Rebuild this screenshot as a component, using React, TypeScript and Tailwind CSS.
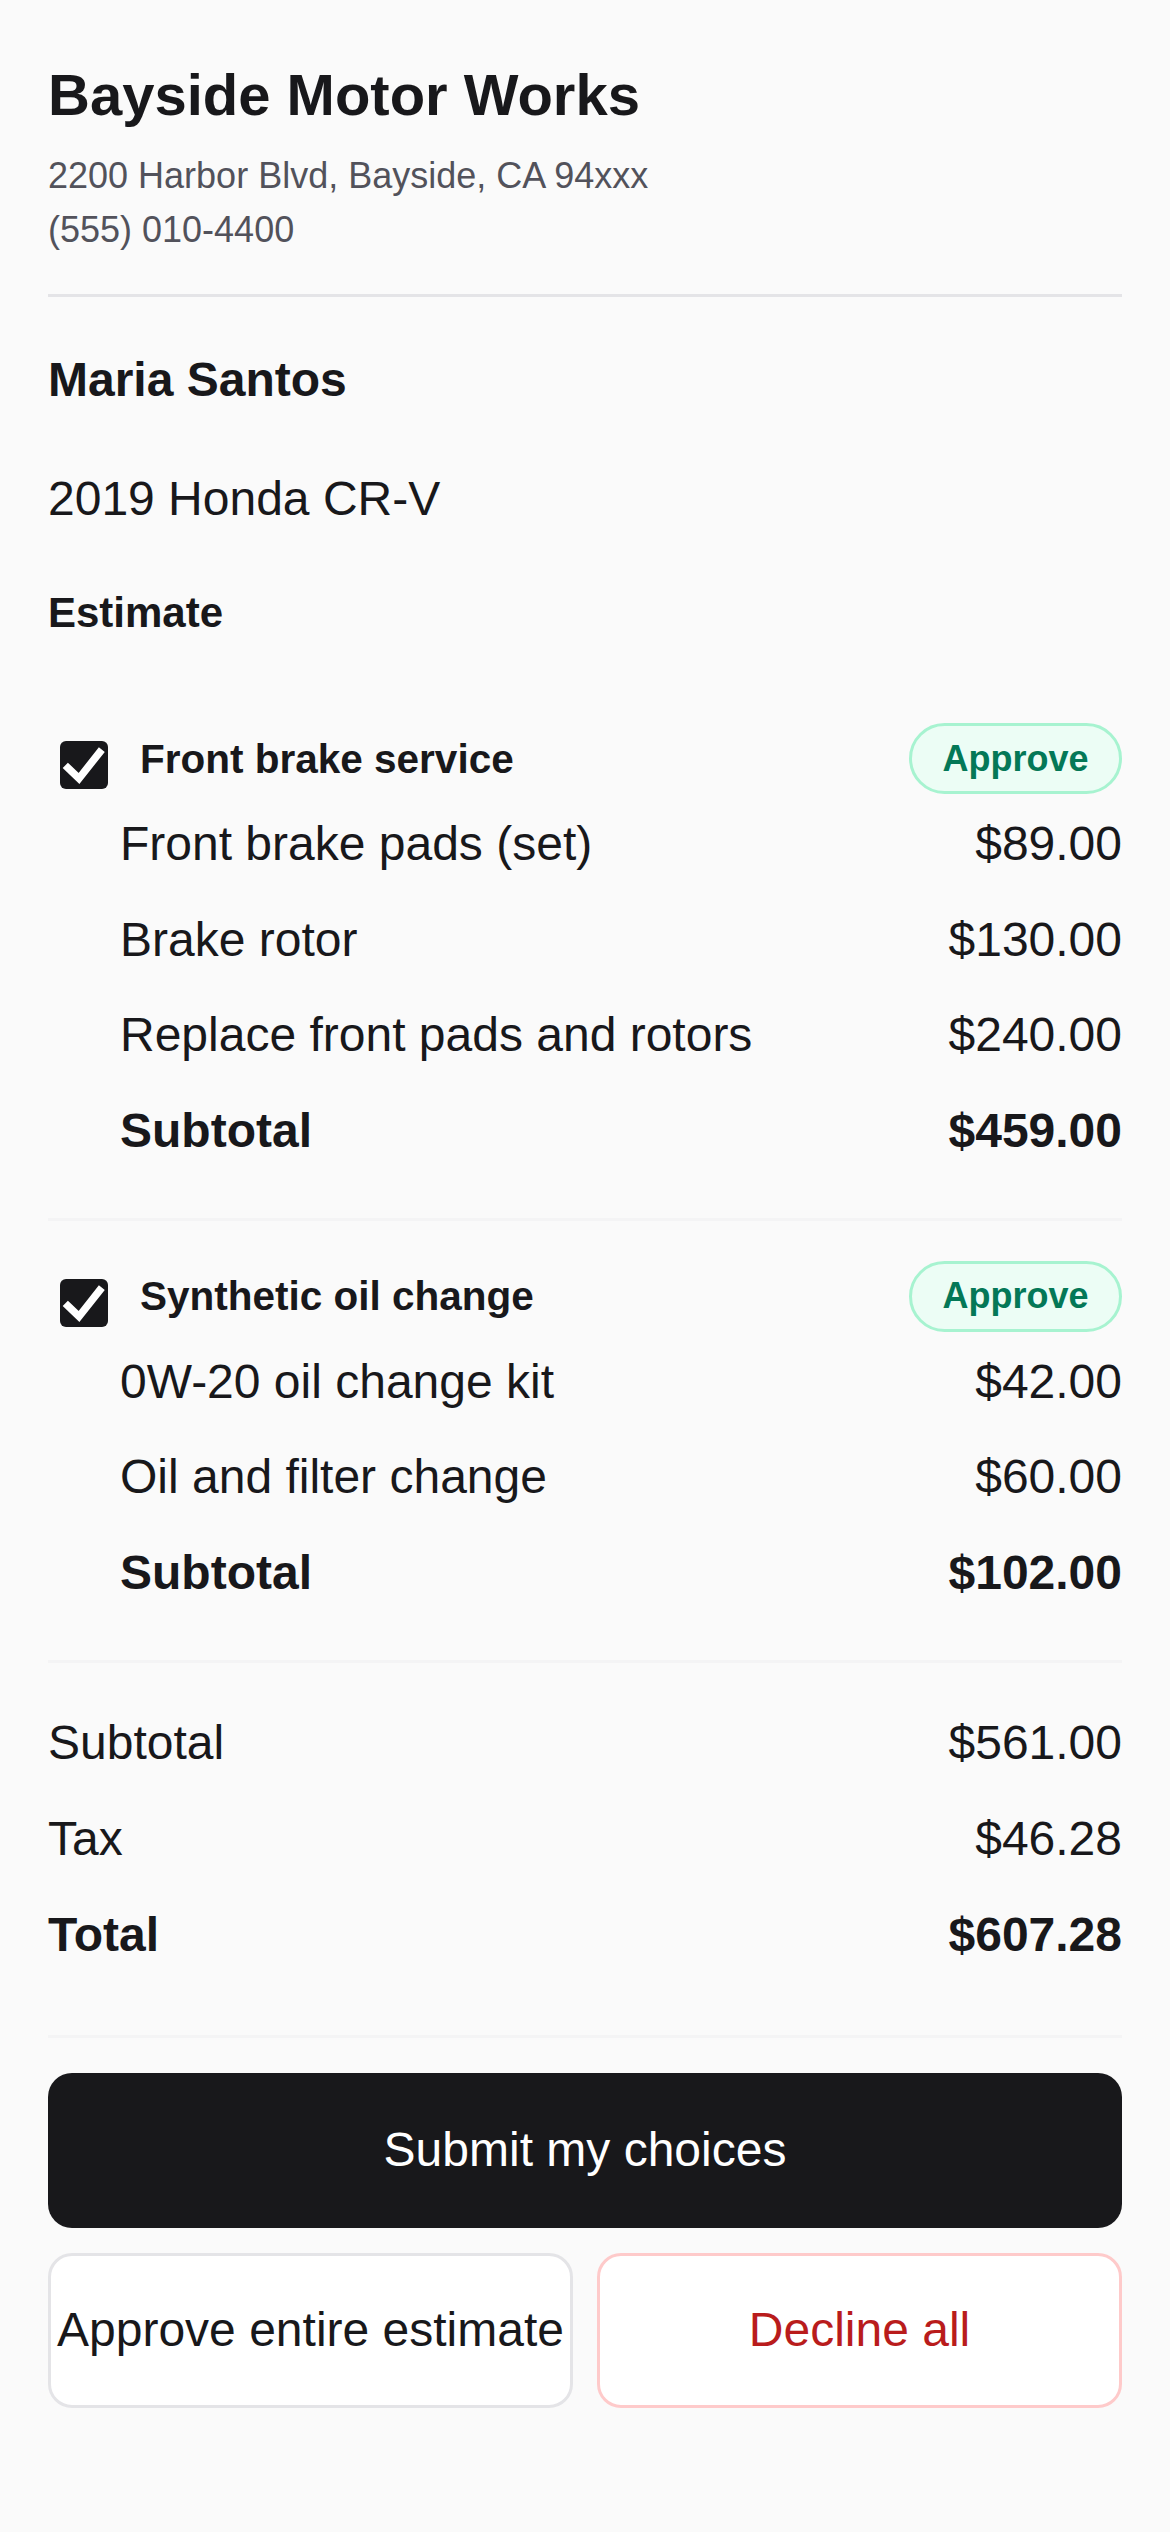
import React from "react";

type Item = { name: string; price: string };
type Group = { title: string; items: Item[]; subtotal: string };

const groups: Group[] = [
  {
    title: "Front brake service",
    items: [
      { name: "Front brake pads (set)", price: "$89.00" },
      { name: "Brake rotor", price: "$130.00" },
      { name: "Replace front pads and rotors", price: "$240.00" },
    ],
    subtotal: "$459.00",
  },
  {
    title: "Synthetic oil change",
    items: [
      { name: "0W-20 oil change kit", price: "$42.00" },
      { name: "Oil and filter change", price: "$60.00" },
    ],
    subtotal: "$102.00",
  },
];

function Check() {
  return (
    <div className="ml-[12px] mr-[9px] mt-[13px] flex h-[48px] w-[48px] shrink-0 items-center justify-center rounded-[6px] bg-[#18181b]">
      <svg width="48" height="48" viewBox="0 0 48 48" fill="none">
        <path d="M8 27 L19 37.5 L39.5 11.5" stroke="#ffffff" strokeWidth="7.5" strokeLinecap="square" strokeLinejoin="miter" />
      </svg>
    </div>
  );
}

function Section({ g }: { g: Group }) {
  return (
    <div className="border-b-[3px] border-[#f4f4f5] pt-[40px] pb-[51px]">
      <div className="flex h-[71px] items-center">
        <Check />
        <div className="ml-[23px] flex-1 text-[40.5px] font-bold leading-[60px]">{g.title}</div>
        <div className="flex h-[71px] w-[213px] items-center justify-center rounded-full border-[3px] border-[#a7f3d0] bg-[#ecfdf5] text-[36px] font-bold leading-[54px] text-[#047857]">
          Approve
        </div>
      </div>
      <div className="mt-[14px] flex flex-col gap-[23.5px] pl-[72px]">
        {g.items.map((it) => (
          <div key={it.name} className="flex justify-between text-[48px] leading-[72px]">
            <span>{it.name}</span>
            <span>{it.price}</span>
          </div>
        ))}
        <div className="flex justify-between text-[48px] font-bold leading-[72px]">
          <span>Subtotal</span>
          <span>{g.subtotal}</span>
        </div>
      </div>
    </div>
  );
}

export default function App() {
  return (
    <div className="min-h-screen bg-[#fafafa] font-['Liberation_Sans',Arial,sans-serif] text-[#18181b]">
      <div className="px-[48px] pt-[50px] pb-[96px]">
        <div className="border-b-[3px] border-[#e4e4e7] pb-[37px]">
          <h1 className="text-[58px] font-bold leading-[90px]">Bayside Motor Works</h1>
          <div className="mt-[9px] text-[36px] leading-[54px] text-[#52525b]">
            <div>2200 Harbor Blvd, Bayside, CA 94xxx</div>
            <div>(555) 010-4400</div>
          </div>
        </div>

        <div className="mt-[47px] text-[48px] font-bold leading-[72px]">Maria Santos</div>
        <div className="mt-[47px] text-[48px] leading-[72px]">2019 Honda CR-V</div>
        <div className="mt-[48px] text-[42px] font-bold leading-[60px]">Estimate</div>

        <div className="mt-[40px]">
          {groups.map((g) => (
            <Section key={g.title} g={g} />
          ))}
        </div>

        <div className="flex flex-col gap-[24px] border-b-[3px] border-[#f4f4f5] pt-[44px] pb-[64px] text-[48px] leading-[72px]">
          <div className="flex justify-between">
            <span>Subtotal</span>
            <span>$561.00</span>
          </div>
          <div className="flex justify-between">
            <span>Tax</span>
            <span>$46.28</span>
          </div>
          <div className="flex justify-between font-bold">
            <span>Total</span>
            <span>$607.28</span>
          </div>
        </div>

        <button className="mt-[35px] flex h-[155px] w-full items-center justify-center rounded-[24px] bg-[#18181b] text-[48px] leading-[72px] text-white">
          Submit my choices
        </button>
        <div className="mt-[25px] grid grid-cols-2 gap-[24px]">
          <button className="flex h-[155px] items-center justify-center whitespace-nowrap rounded-[24px] border-[3px] border-[#e4e4e7] bg-white text-[48px] leading-[72px] text-[#18181b]">
            Approve entire estimate
          </button>
          <button className="flex h-[155px] items-center justify-center rounded-[24px] border-[3px] border-[#fecaca] bg-white text-[48px] leading-[72px] text-[#b91c1c]">
            Decline all
          </button>
        </div>
      </div>
    </div>
  );
}
